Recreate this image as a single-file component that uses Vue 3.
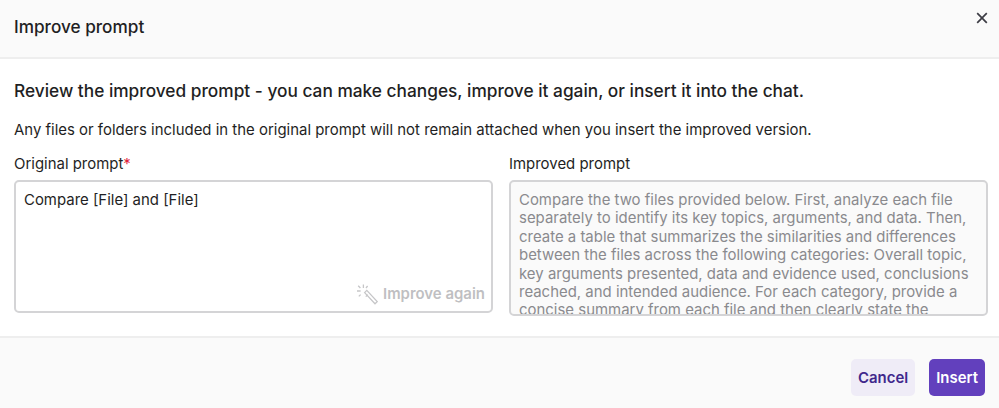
<template>
  <div class="dialog">
    <header class="dialog-header">
      <h2>Improve prompt</h2>
      <button type="button" class="close-btn" aria-label="Close">
        <svg width="12" height="12" viewBox="0 0 12 12">
          <path d="M1.2 1.2 L10.8 10.8 M10.8 1.2 L1.2 10.8" stroke="#3c3c44" stroke-width="1.7" fill="none" />
        </svg>
      </button>
    </header>

    <main class="dialog-body">
      <h3>Review the improved prompt - you can make changes, improve it again, or insert it into the chat.</h3>
      <p class="note">Any files or folders included in the original prompt will not remain attached when you insert the improved version.</p>

      <div class="columns">
        <div class="field">
          <label>Original prompt<span class="req">*</span></label>
          <div class="box original">
            <div class="box-text">{{ original }}</div>
            <button type="button" class="improve-btn">
              <svg width="22" height="22" viewBox="0 0 22 22" fill="none" stroke="#c6c6c8" stroke-width="1.3">
                <path d="M8.6 9.6 L10.8 7.4 L21.2 18.6 L19 20.8 Z" />
                <path d="M11.8 11.6 L9.8 13.6" />
                <path d="M7.4 1.4 V5 M1 8 H4.6 M11.6 3 L10 5 M2.2 2.8 L4.4 5 M2.8 13.4 L4.6 11.6" />
              </svg>
              Improve again
            </button>
          </div>
        </div>

        <div class="field">
          <label>Improved prompt</label>
          <div class="box improved">
            <div class="box-text">{{ improved }}</div>
          </div>
        </div>
      </div>
    </main>

    <footer class="dialog-footer">
      <button type="button" class="btn btn-secondary">Cancel</button>
      <button type="button" class="btn btn-primary">Insert</button>
    </footer>
  </div>
</template>

<script setup>
const original = 'Compare [File] and [File]'

const improved =
  'Compare the two files provided below. First, analyze each file separately to identify its key topics, arguments, and data. Then, create a table that summarizes the similarities and differences between the files across the following categories: Overall topic, key arguments presented, data and evidence used, conclusions reached, and intended audience. For each category, provide a concise summary from each file and then clearly state the similarities and differences.'
</script>

<style>
body {
  margin: 0;
  background: #fff;
}
</style>

<style scoped>
.dialog {
  width: 999px;
  height: 408px;
  display: flex;
  flex-direction: column;
  font-family: Inter, "Liberation Sans", sans-serif;
  color: #1f1f24;
  overflow: hidden;
}

.dialog-header {
  height: 57px;
  flex: none;
  display: flex;
  justify-content: space-between;
  align-items: flex-start;
  padding: 0 11px 0 14px;
  background: #fafafa;
  border-bottom: 2px solid #eeeeee;
}

.dialog-header h2 {
  margin: 17px 0 0;
  font-size: 17.2px;
  line-height: 20px;
  font-weight: 500;
}

.close-btn {
  display: flex;
  margin-top: 12px;
  padding: 0;
  border: none;
  background: none;
}

.dialog-body {
  flex: none;
  height: 277px;
  padding: 0 14px;
  box-sizing: border-box;
}

.dialog-body h3 {
  margin: 21px 0 0;
  font-size: 17.3px;
  line-height: 22px;
  font-weight: 500;
  white-space: nowrap;
}

.note {
  margin: 18px 0 0;
  font-size: 14.95px;
  line-height: 20px;
  white-space: nowrap;
}

.columns {
  display: grid;
  grid-template-columns: 479px 479px;
  gap: 16px;
  margin-top: 14px;
}

.field label {
  display: block;
  font-size: 14.95px;
  line-height: 20px;
  margin-bottom: 6px;
}

.req {
  color: #e0243a;
}

.box {
  position: relative;
  height: 133px;
  box-sizing: border-box;
  border: 2px solid #d4d4d6;
  border-radius: 5px;
  padding: 9px 8px 8px;
  font-size: 14.95px;
  line-height: 18.4px;
  overflow: hidden;
}

.improved {
  background: #fafafa;
  height: 136px;
  color: #8a8a8e;
  padding-right: 12px;
}

.improve-btn {
  position: absolute;
  right: 6px;
  bottom: 6px;
  display: flex;
  align-items: center;
  gap: 5px;
  padding: 0;
  border: none;
  background: none;
  font-family: inherit;
  font-size: 14.95px;
  font-weight: 600;
  color: #bfbfc2;
}

.dialog-footer {
  flex: 1;
  display: flex;
  justify-content: flex-end;
  align-items: flex-start;
  gap: 14px;
  padding: 21px 14px 0;
  background: #fafafa;
  border-top: 2px solid #eeeeee;
}

.btn {
  height: 37px;
  padding: 0 7px;
  border: none;
  border-radius: 5px;
  font-family: inherit;
  font-size: 14.95px;
  font-weight: 600;
}

.btn-secondary {
  background: #efecf7;
  color: #40288c;
}

.btn-primary {
  background: #6240bd;
  color: #fff;
}
</style>
